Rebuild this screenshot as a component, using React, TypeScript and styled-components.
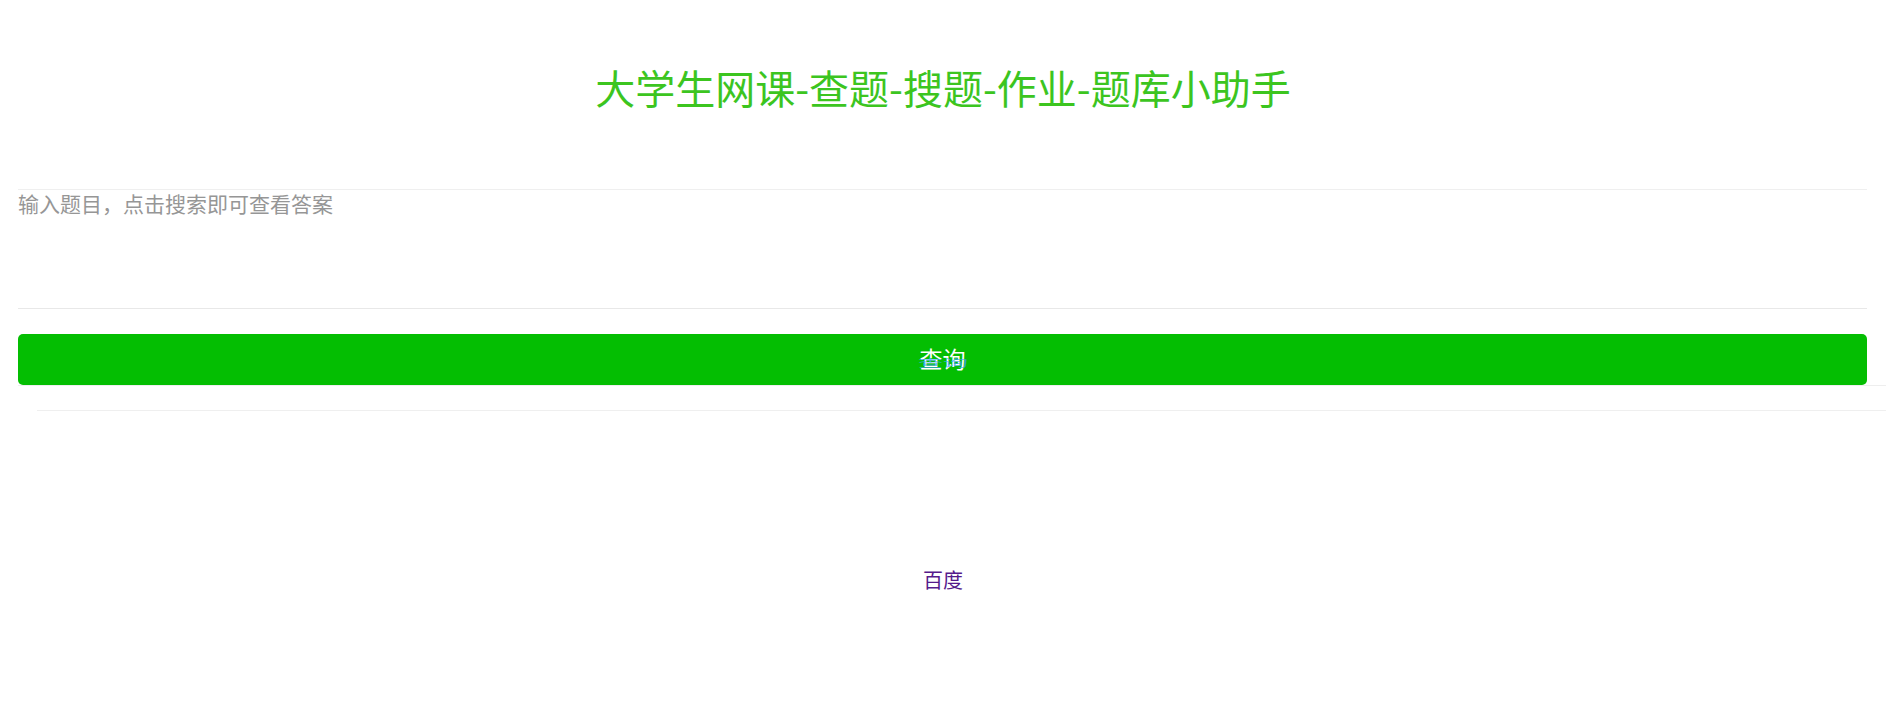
import React, { useState } from 'react';
import styled, { createGlobalStyle } from 'styled-components';

const GlobalStyle = createGlobalStyle`
	html, body {
		margin: 0;
		padding: 0;
		background: #fff;
	}
	body {
		font-family: "Noto Sans CJK SC", "Liberation Sans", sans-serif;
	}
`

const Page = styled.div`
	width: 100%;
	min-height: 720px;
	display: flex;
	flex-direction: column;
	overflow: hidden;
`

const Title = styled.h1`
	margin: 0;
	padding-top: 67px;
	font-size: 40px;
	line-height: 40px;
	font-weight: normal;
	color: #3cc51f;
	text-align: center;
`

const Field = styled.div`
	margin: 82px 19px 0 18px;
	border-top: 1px solid #efefef;
	border-bottom: 1px solid #e8e8e8;
`

const Question = styled.textarea`
	display: block;
	width: 100%;
	height: 118px;
	box-sizing: border-box;
	margin: 0;
	padding: 0;
	border: none;
	outline: none;
	resize: none;
	font-family: "Liberation Serif", "Noto Sans CJK SC", serif;
	font-size: 21px;
	line-height: 30px;
	color: #333;

	&::placeholder{
		color: #969696;
	}
`

const ButtonRow = styled.div`
	margin: 25px 0 0 18px;
	padding-right: 19px;
	border-bottom: 1px solid #eeeeee;
`

const SearchButton = styled.button`
	position: relative;
	display: block;
	width: 100%;
	height: 51px;
	margin: 0;
	padding: 0 0 3px;
	border: none;
	border-radius: 5px;
	background-color: #04be02;
	color: #fff;
	font-family: "Noto Sans CJK SC", "Liberation Sans", sans-serif;
	font-size: 23px;
	line-height: 48px;
	cursor: pointer;

	& .label{
		position: relative;
	}

	& .ghost{
		position: absolute;
		left: 50%;
		top: 4px;
		font-size: 22px;
		white-space: nowrap;
		color: rgba(60, 160, 255, 0.75);
		transform: translateX(-50%) scale(1.14, 0.48);
		pointer-events: none;
	}
`

const Divider = styled.div`
	margin: 24px 0 0 37px;
	border-top: 1px solid #efefef;
`

const Footer = styled.div`
	margin-top: 155px;
	text-align: center;
	font-size: 20px;
	line-height: 28px;

	a{
		color: #551a8b;
		text-decoration: none;
	}
`

const App: React.FC = ()=>{
	const [question, setQuestion] = useState('');

	return (
		<Page>
			<GlobalStyle />
			<Title>大学生网课-查题-搜题-作业-题库小助手</Title>
			<Field>
				<Question
					placeholder="输入题目，点击搜索即可查看答案"
					value={question}
					onChange={e => setQuestion(e.target.value)} />
			</Field>
			<ButtonRow>
				<SearchButton type="button">
					<span className="label">查询</span>
					<span className="ghost" aria-hidden="true">查询</span>
				</SearchButton>
			</ButtonRow>
			<Divider />
			<Footer>
				<a href="#baidu">百度</a>
			</Footer>
		</Page>
	)
}

export default App;
